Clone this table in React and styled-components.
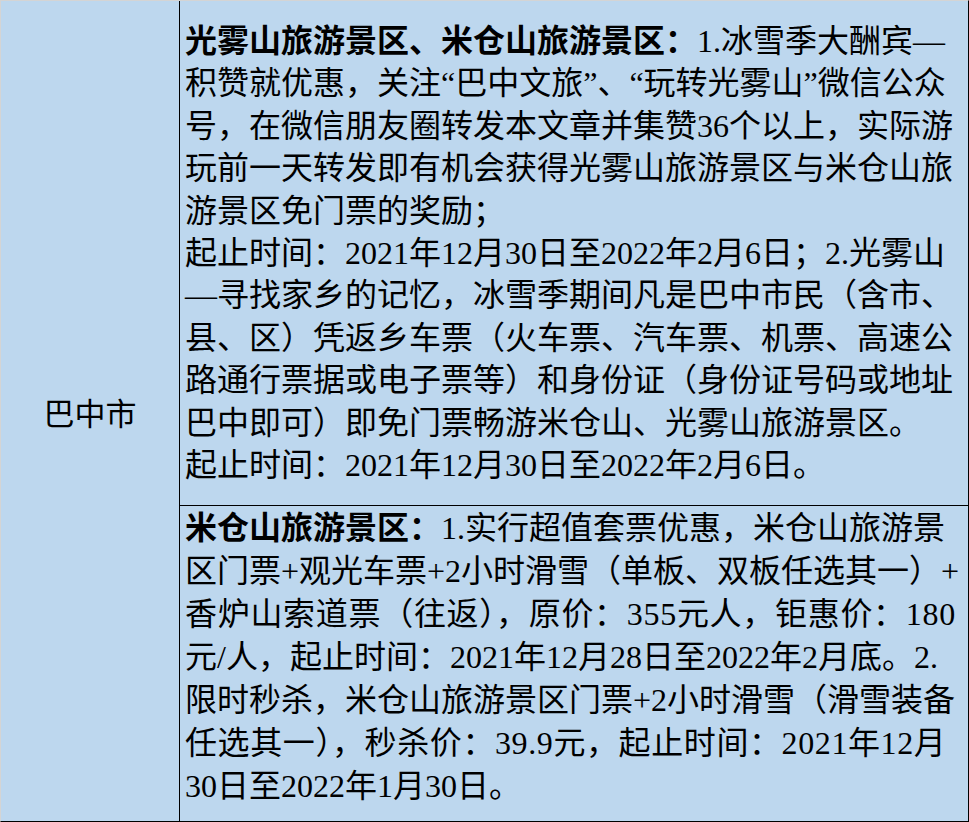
import React from "react";
import styled, { createGlobalStyle } from "styled-components";

const GlobalStyle = createGlobalStyle`
  html, body { margin: 0; padding: 0; background: #bdd7ee; }
  #root { width: 969px; height: 822px; }
`;

const Table = styled.div`
  box-sizing: border-box;
  width: 969px;
  height: 822px;
  display: grid;
  grid-template-columns: 179px 1fr;
  background: #bdd7ee;
  border-top: 1px solid #d4d4d4;
  border-left: 1px solid #d4d4d4;
  border-right: 1px solid #000;
  border-bottom: 1px solid #000;
`;

const CityCell = styled.div`
  border-right: 1px solid #000;
  display: flex;
  align-items: center;
  justify-content: center;
  padding-top: 1px;
  font-family: "Noto Sans CJK SC", sans-serif;
  font-size: 31px;
  color: #000;
`;

const Column = styled.div`
  display: flex;
  flex-direction: column;
`;

const Cell = styled.div`
  box-sizing: border-box;
  height: ${(p) => p.$h}px;
  padding: ${(p) => p.$pt}px 0 0 5px;
  border-bottom: ${(p) => (p.$last ? "none" : "1px solid #000")};
  font-family: "Liberation Serif", "Noto Sans CJK SC", serif;
  font-size: 32px;
  color: #000;
  overflow: hidden;
`;

const Line = styled.div`
  white-space: nowrap;
  height: ${(p) => p.$lh}px;
  line-height: ${(p) => p.$lh}px;
`;

const Strong = styled.span`
  font-weight: 700;
`;

const Wide = styled.span`
  letter-spacing: ${(p) => p.$ls}px;
`;

const cell1 = [
  [<Strong key="b">光雾山旅游景区、米仓山旅游景区：</Strong>, "1.冰雪季大酬宾—"],
  ["积赞就优惠，关注“巴中文旅”、“玩转光雾山”微信公众"],
  ["号，在微信朋友圈转发本文章并集赞36个以上，实际游"],
  ["玩前一天转发即有机会获得光雾山旅游景区与米仓山旅"],
  ["游景区免门票的奖励；"],
  ["起止时间：2021年12月30日至2022年2月6日；2.光雾山"],
  ["—寻找家乡的记忆，冰雪季期间凡是巴中市民（含市、"],
  ["县、区）凭返乡车票（火车票、汽车票、机票、高速公"],
  ["路通行票据或电子票等）和身份证（身份证号码或地址"],
  ["巴中即可）即免门票畅游米仓山、光雾山旅游景区。"],
  ["起止时间：2021年12月30日至2022年2月6日。"],
];

const cell2 = [
  [<Strong key="b">米仓山旅游景区：</Strong>, "1.实行超值套票优惠，米仓山旅游景"],
  ["区门票+观光车票+2小时滑雪（单板、双板任选其一）+"],
  [<Wide key="w" $ls={0.7}>香炉山索道票（往返），原价：355元人，钜惠价：180</Wide>],
  ["元/人，起止时间：2021年12月28日至2022年2月底。2."],
  ["限时秒杀，米仓山旅游景区门票+2小时滑雪（滑雪装备"],
  [<Wide key="w" $ls={0.6}>任选其一），秒杀价：39.9元，起止时间：2021年12月</Wide>],
  ["30日至2022年1月30日。"],
];

export default function App() {
  return (
    <>
      <GlobalStyle />
      <Table>
        <CityCell>巴中市</CityCell>
        <Column>
          <Cell $h={505} $pt={19}>
            {cell1.map((parts, i) => (
              <Line key={i} $lh={42.4}>
                {parts}
              </Line>
            ))}
          </Cell>
          <Cell $h={315} $pt={1} $last>
            {cell2.map((parts, i) => (
              <Line key={i} $lh={43}>
                {parts}
              </Line>
            ))}
          </Cell>
        </Column>
      </Table>
    </>
  );
}
